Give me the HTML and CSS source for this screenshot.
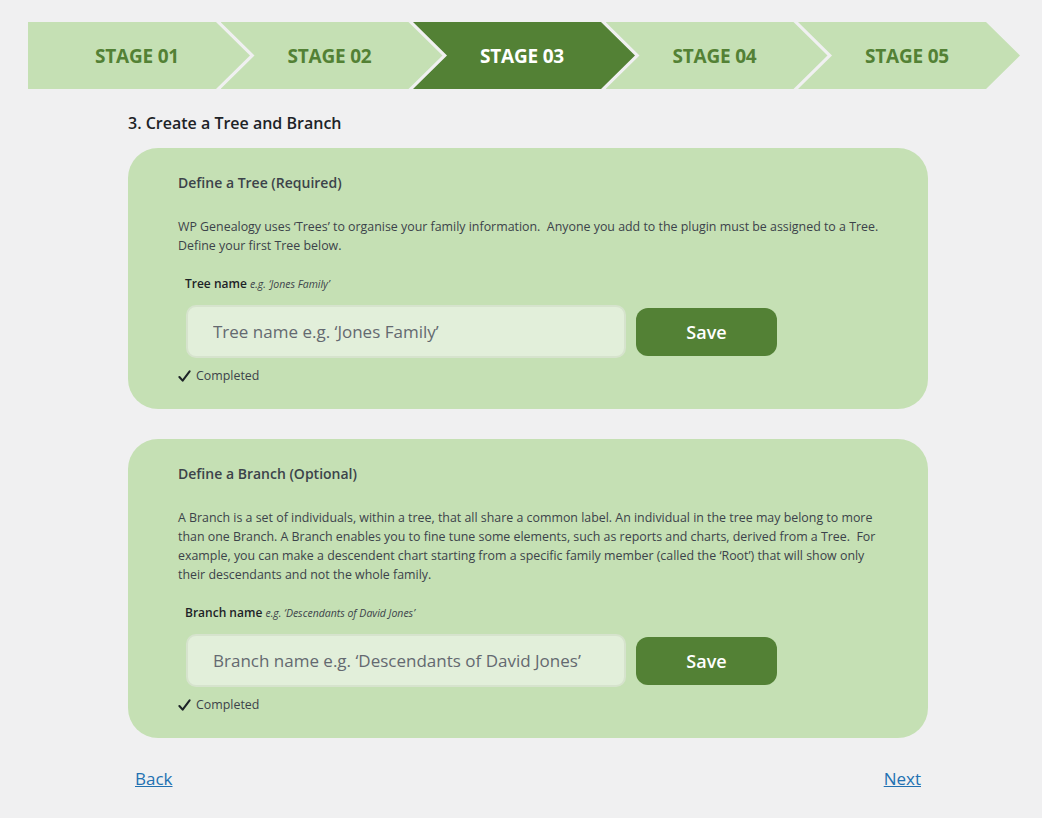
FILE: index.html
```html
<!DOCTYPE html>
<html lang="en">
<head>
<meta charset="utf-8">
<title>WP Genealogy setup</title>
<link rel="stylesheet" href="styles.css">
</head>
<body>
<div class="page">
  <nav class="stages">
    <div class="stage stage-first">STAGE 01</div>
    <div class="stage">STAGE 02</div>
    <div class="stage stage-active">STAGE 03</div>
    <div class="stage">STAGE 04</div>
    <div class="stage">STAGE 05</div>
  </nav>

  <main class="content">
    <h2 class="step-title">3. Create a Tree and Branch</h2>

    <section class="card">
      <h3 class="card-title">Define a Tree (Required)</h3>
      <p class="card-text">WP Genealogy uses ‘Trees’ to organise your family information.&nbsp; Anyone you add to the plugin must be assigned to a Tree.<br>Define your first Tree below.</p>
      <label class="field-label">Tree name <em>e.g. ‘Jones Family’</em></label>
      <div class="field-row">
        <input class="field-input" type="text" placeholder="Tree name e.g. ‘Jones Family’">
        <button class="save-btn" type="button">Save</button>
      </div>
      <div class="completed">
        <svg class="check" viewBox="0 0 14 14" width="13" height="13"><path d="M1.5 7.6 L5 11.5 L12.5 1.5" fill="none" stroke="#1d2327" stroke-width="2.2" stroke-linecap="round" stroke-linejoin="round"/></svg>
        <span>Completed</span>
      </div>
    </section>

    <section class="card">
      <h3 class="card-title">Define a Branch (Optional)</h3>
      <p class="card-text">A Branch is a set of individuals, within a tree, that all share a common label. An individual in the tree may belong to more<br>than one Branch. A Branch enables you to fine tune some elements, such as reports and charts, derived from a Tree.&nbsp; For<br>example, you can make a descendent chart starting from a specific family member (called the ‘Root’) that will show only<br>their descendants and not the whole family.</p>
      <label class="field-label">Branch name <em>e.g. ‘Descendants of David Jones’</em></label>
      <div class="field-row">
        <input class="field-input" type="text" placeholder="Branch name e.g. ‘Descendants of David Jones’">
        <button class="save-btn" type="button">Save</button>
      </div>
      <div class="completed">
        <svg class="check" viewBox="0 0 14 14" width="13" height="13"><path d="M1.5 7.6 L5 11.5 L12.5 1.5" fill="none" stroke="#1d2327" stroke-width="2.2" stroke-linecap="round" stroke-linejoin="round"/></svg>
        <span>Completed</span>
      </div>
    </section>

    <div class="nav-links">
      <a href="#" class="nav-link">Back</a>
      <a href="#" class="nav-link">Next</a>
    </div>
  </main>
</div>
</body>
</html>
```

FILE: styles.css
```css
* { box-sizing: border-box; }

html, body {
  margin: 0;
  padding: 0;
  background: #f0f0f1;
  font-family: "Open Sans", "Noto Sans", sans-serif;
  color: #3c434a;
}

.page {
  padding: 22px 0 0 28px;
}

/* ---------- stage chevrons ---------- */
.stages {
  display: flex;
  height: 67px;
}

.stage {
  flex: 0 0 222px;
  height: 67px;
  margin-left: -29.5px;
  display: flex;
  align-items: center;
  justify-content: center;
  padding-right: 4px;
  background: #c5e0b4;
  color: #538135;
  font-weight: 700;
  font-size: 19px;
  letter-spacing: -0.2px;
  clip-path: polygon(0 0, 188px 0, 222px 33.5px, 188px 67px, 0 67px, 34px 33.5px);
}

.stage-first {
  margin-left: 0;
  clip-path: polygon(0 0, 188px 0, 222px 33.5px, 188px 67px, 0 67px);
}

.stage-active {
  background: #538135;
  color: #ffffff;
}

/* ---------- content ---------- */
.content {
  width: 800px;
  margin: 24px 0 0 100px;
}

.step-title {
  margin: 0 0 15px;
  font-size: 16px;
  line-height: 20px;
  font-weight: 600;
  color: #1d2327;
}

.card {
  background: #c5e0b4;
  border-radius: 30px;
  padding: 25px 50px 25px;
  margin-bottom: 30px;
}

.card-title {
  margin: 0;
  font-size: 14px;
  line-height: 20px;
  font-weight: 600;
  color: #3c434a;
}

.card-text {
  margin: 24px 0 0;
  font-size: 12.4px;
  line-height: 19px;
  color: #3c434a;
  white-space: nowrap;
}

.field-label {
  display: block;
  margin: 21px 0 0 7px;
  font-size: 12px;
  line-height: 16px;
  font-weight: 600;
  color: #1d2327;
}

.field-label em {
  font-weight: 400;
  font-size: 10.5px;
  color: #3c434a;
}

.field-row {
  display: flex;
  align-items: center;
  gap: 10px;
  margin: 13px 0 0 8px;
}

.field-input {
  width: 440px;
  height: 53px;
  background: #e2efda;
  border: 2px solid #d6e3cd;
  border-radius: 10px;
  padding: 0 25px;
  font-family: inherit;
  font-size: 17px;
  color: #3c434a;
  outline: none;
}

.field-input::placeholder {
  color: #646970;
}

.save-btn {
  width: 141px;
  height: 48px;
  border: 0;
  border-radius: 12px;
  background: #538135;
  color: #ffffff;
  font-family: inherit;
  font-size: 18px;
  font-weight: 600;
  cursor: pointer;
}

.completed {
  display: flex;
  align-items: center;
  gap: 5px;
  margin-top: 10px;
  font-size: 12.4px;
  line-height: 16px;
  color: #3c434a;
}

.check {
  display: block;
}

.nav-links {
  display: flex;
  justify-content: space-between;
  padding: 0 7px;
}

.nav-link {
  font-size: 17px;
  line-height: 22px;
  color: #2271b1;
  text-decoration: underline;
}
```
